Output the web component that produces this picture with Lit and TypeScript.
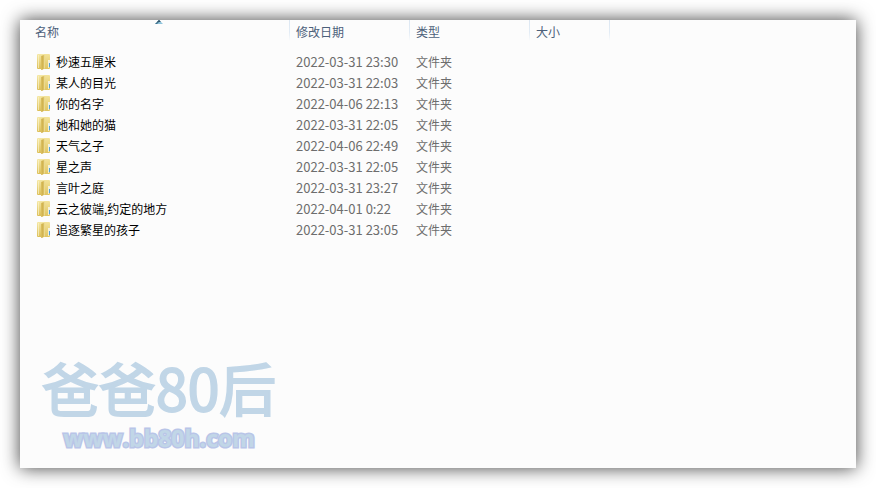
import { LitElement, html, css } from "lit";
import { customElement, property } from "lit/decorators.js";

interface Entry {
  name: string;
  modified: string;
}

const FOLDER_TYPE = "文件夹";

const ENTRIES: Entry[] = [
  { name: "秒速五厘米", modified: "2022-03-31 23:30" },
  { name: "某人的目光", modified: "2022-03-31 22:03" },
  { name: "你的名字", modified: "2022-04-06 22:13" },
  { name: "她和她的猫", modified: "2022-03-31 22:05" },
  { name: "天气之子", modified: "2022-04-06 22:49" },
  { name: "星之声", modified: "2022-03-31 22:05" },
  { name: "言叶之庭", modified: "2022-03-31 23:27" },
  { name: "云之彼端,约定的地方", modified: "2022-04-01 0:22" },
  { name: "追逐繁星的孩子", modified: "2022-03-31 23:05" },
];

@customElement("folder-icon")
export class FolderIcon extends LitElement {
  static styles = css`
    :host {
      display: block;
      flex: none;
      width: 14px;
      height: 16px;
    }
    svg {
      display: block;
    }
  `;

  render() {
    return html`
      <svg width="14" height="16" viewBox="0 0 14 16" aria-hidden="true">
        <defs>
          <linearGradient id="back" x1="0" x2="0" y1="0" y2="1">
            <stop offset="0" stop-color="#f3e39a" />
            <stop offset="1" stop-color="#e0c560" />
          </linearGradient>
          <linearGradient id="left" x1="0" x2="0" y1="0" y2="1">
            <stop offset="0" stop-color="#f5e8a6" />
            <stop offset="1" stop-color="#dcbf58" />
          </linearGradient>
          <linearGradient id="flap" x1="0" x2="1" y1="0" y2="0">
            <stop offset="0" stop-color="#dcc163" />
            <stop offset="0.5" stop-color="#cfb04a" />
            <stop offset="1" stop-color="#f4e7a8" />
          </linearGradient>
        </defs>
        <path d="M6 0h6q1 0 1 1v13q0 1-1 1H6z" fill="url(#back)" />
        <path d="M11 6h2v4h-2z" fill="#f4f1de" />
        <path d="M12 9h1v4h-1z" fill="#4fa2dc" />
        <path d="M11 9h1v5h-1z" fill="#f0eedc" />
        <path d="M0 1q0-1 1-1h5q1 0 1 1v14H1q-1 0-1-1z" fill="url(#left)" />
        <path d="M1 1h1v13H1z" fill="#fbf4cc" opacity=".7" />
        <path d="M4 2 7 1q1-.4 1 .6v12.6L5 16q-1 .2-1-.8z" fill="url(#flap)" />
      </svg>
    `;
  }
}

@customElement("file-list")
export class FileList extends LitElement {
  @property({ attribute: false }) entries: Entry[] = [];

  static styles = css`
    :host {
      display: block;
    }
    table {
      border-collapse: collapse;
      table-layout: fixed;
      width: 100%;
      font-size: 12px;
      line-height: 21px;
    }
    .name {
      width: 270px;
    }
    .date,
    .type {
      width: 120px;
    }
    .size {
      width: 80px;
    }
    th,
    td {
      padding: 0;
      text-align: left;
      font-weight: 400;
      white-space: nowrap;
    }
    th {
      height: 31px;
      vertical-align: top;
    }
    button {
      position: relative;
      display: block;
      width: 100%;
      height: 24px;
      padding: 0 0 0 6px;
      border: 0;
      background: linear-gradient(#dce7f2, #e3ecf5 60%, #fcfcfc) right top / 1px 21px no-repeat;
      color: #4c607a;
      font: inherit;
      line-height: 24px;
      text-align: left;
    }
    .name button {
      padding-left: 15px;
    }
    .sort {
      position: absolute;
      top: 0;
      left: 50%;
    }
    td {
      padding-left: 6px;
      color: #6d6d6d;
    }
    td.label {
      padding-left: 17px;
      color: #000;
    }
    .item {
      display: flex;
      align-items: center;
      gap: 5px;
    }
    .stamp {
      font-size: 13px;
    }
  `;

  render() {
    return html`
      <table>
        <thead>
          <tr>
            <th class="name" scope="col" aria-sort="ascending">
              <button type="button">
                名称
                <svg class="sort" width="8" height="4" viewBox="0 0 8 4" aria-hidden="true">
                  <path d="M4 0 8 4H0z" fill="#8fc4dc" />
                  <path d="M4 0 0 4h2l3-3z" fill="#41708a" />
                  <path d="M4 0 6 2H2z" fill="#35566b" />
                </svg>
              </button>
            </th>
            <th class="date" scope="col"><button type="button">修改日期</button></th>
            <th class="type" scope="col"><button type="button">类型</button></th>
            <th class="size" scope="col"><button type="button">大小</button></th>
            <td></td>
          </tr>
        </thead>
        <tbody>
          ${this.entries.map(
            (entry) => html`
              <tr>
                <td class="label">
                  <div class="item"><folder-icon></folder-icon>${entry.name}</div>
                </td>
                <td class="stamp">${entry.modified}</td>
                <td>${FOLDER_TYPE}</td>
                <td></td>
                <td></td>
              </tr>
            `
          )}
        </tbody>
      </table>
    `;
  }
}

@customElement("app-root")
export class AppRoot extends LitElement {
  static styles = css`
    :host {
      display: flex;
      box-sizing: border-box;
      min-height: 100vh;
      padding: 20px;
      background: #fff;
      font-family: "Noto Sans CJK SC", sans-serif;
    }
    main {
      display: flex;
      flex: 1;
      flex-direction: column;
      justify-content: space-between;
      background: #fcfcfc;
      box-shadow: 0 0 17px rgba(0, 0, 0, 0.75);
    }
    .watermark {
      align-self: flex-start;
      padding: 0 0 14px 22px;
      color: #c1d6e7;
      text-align: center;
      white-space: nowrap;
    }
    .brand {
      font-size: 57px;
      line-height: 72px;
      -webkit-text-stroke: 2px #c1d6e7;
    }
    .site {
      font-family: "Open Sans", "Noto Sans", sans-serif;
      font-size: 23px;
      font-weight: 700;
      line-height: 32px;
      -webkit-text-stroke: 3px #b9c5e8;
      paint-order: stroke fill;
    }
  `;

  render() {
    return html`
      <main>
        <file-list .entries=${ENTRIES}></file-list>
        <div class="watermark">
          <div class="brand">爸爸80后</div>
          <div class="site">www.bb80h.com</div>
        </div>
      </main>
    `;
  }
}
